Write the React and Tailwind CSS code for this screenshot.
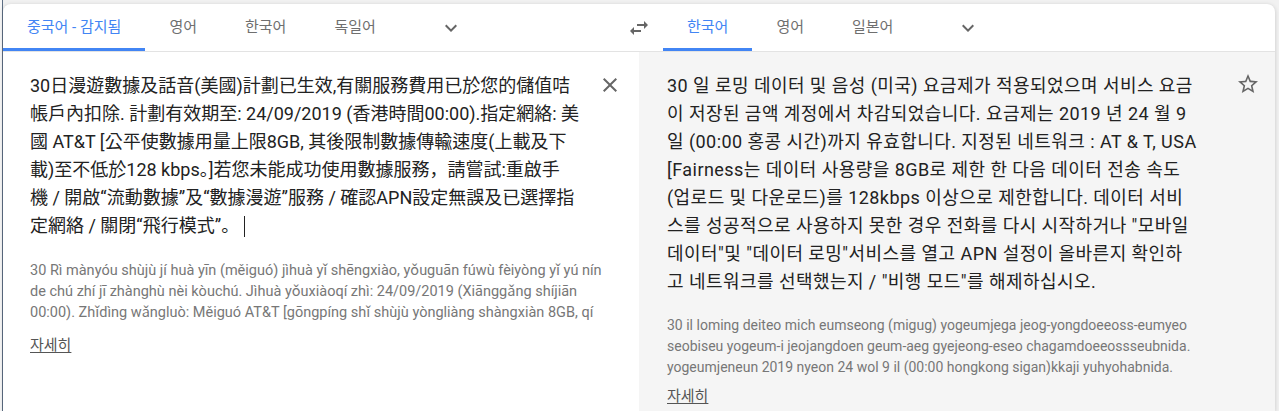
const zhLines = [
  '30日漫遊數據及話音(美國)計劃已生效,有關服務費用已於您的儲值咭',
  '帳戶內扣除. 計劃有效期至: 24/09/2019 (香港時間00:00).指定網絡: 美',
  '國 AT&T [公平使數據用量上限8GB, 其後限制數據傳輸速度(上載及下',
  '載)至不低於128 kbps。]若您未能成功使用數據服務，請嘗試:重啟手',
  '機 / 開啟“流動數據”及“數據漫遊”服務 / 確認APN設定無誤及已選擇指',
];

const pinyin = [
  '30 Rì mànyóu shùjù jí huà yīn (měiguó) jìhuà yǐ shēngxiào, yǒuguān fúwù fèiyòng yǐ yú nín',
  'de chú zhí jī zhànghù nèi kòuchú. Jìhuà yǒuxiàoqí zhì: 24/09/2019 (Xiānggǎng shíjiān',
  '00:00). Zhǐdìng wǎngluò: Měiguó AT&T [gōngpíng shǐ shùjù yòngliàng shàngxiàn 8GB, qí',
];

const koLines = [
  '30 일 로밍 데이터 및 음성 (미국) 요금제가 적용되었으며 서비스 요금',
  '이 저장된 금액 계정에서 차감되었습니다. 요금제는 2019 년 24 월 9',
  '일 (00:00 홍콩 시간)까지 유효합니다. 지정된 네트워크 : AT & T, USA',
  '[Fairness는 데이터 사용량을 8GB로 제한 한 다음 데이터 전송 속도',
  '(업로드 및 다운로드)를 128kbps 이상으로 제한합니다. 데이터 서비',
  '스를 성공적으로 사용하지 못한 경우 전화를 다시 시작하거나 "모바일',
  '데이터"및 "데이터 로밍"서비스를 열고 APN 설정이 올바른지 확인하',
  '고 네트워크를 선택했는지 / "비행 모드"를 해제하십시오.',
];

const roman = [
  '30 il loming deiteo mich eumseong (migug) yogeumjega jeog-yongdoeeoss-eumyeo',
  'seobiseu yogeum-i jeojangdoen geum-aeg gyejeong-eseo chagamdoeeossseubnida.',
  'yogeumjeneun 2019 nyeon 24 wol 9 il (00:00 hongkong sigan)kkaji yuhyohabnida.',
];

const Icon = ({ d, className = 'w-6 h-6' }) => (
  <svg className={className} viewBox="0 0 24 24" fill="currentColor">
    <path d={d} />
  </svg>
);

const Tab = ({ label, active }) => (
  <div
    className={
      active
        ? 'px-6 h-full flex items-center border-b-[3px] border-[#4285f4] text-[#4285f4] pt-[3px]'
        : 'px-6 h-full flex items-center border-b-[3px] border-transparent text-[#6f6f6f] pt-[3px]'
    }
  >
    {label}
  </div>
);

const Chevron = () => (
  <div className="ml-[39px] h-full flex items-center text-[#666]">
    <Icon d="M16.59 8.59L12 13.17 7.41 8.59 6 10l6 6 6-6z" />
  </div>
);

export default function App() {
  return (
    <div
      className="w-full h-[411px] overflow-hidden bg-[#f1f1f1] flex"
      style={{ fontFamily: 'Roboto, "Noto Sans CJK KR", "Noto Sans CJK TC", sans-serif' }}
    >
      <div className="w-[2px] shrink-0 bg-[#f7f7f7]" />
      <div className="w-px shrink-0 bg-[#5d6e84]" />

      <div className="flex-1 mt-[4px] mr-[4px] bg-white rounded-t-lg shadow-[0_1px_4px_rgba(0,0,0,0.18)] flex flex-col overflow-hidden">
        {/* language bar */}
        <div className="h-[48px] shrink-0 flex border-b border-[#e3e3e3] text-[15px]">
          <div className="flex-1 flex h-[47px]">
            <Tab label="중국어 - 감지됨" active />
            <Tab label="영어" />
            <Tab label="한국어" />
            <Tab label="독일어" />
            <Chevron />
          </div>
          <div className="w-[48px] h-[47px] flex items-center justify-center text-[#666]">
            <Icon d="M6.99 11L3 15l3.99 4v-3H14v-2H6.99v-3zM21 9l-3.99-4v3H10v2h7.01v3L21 9z" />
          </div>
          <div className="flex-1 flex h-[47px]">
            <Tab label="한국어" active />
            <Tab label="영어" />
            <Tab label="일본어" />
            <Chevron />
          </div>
        </div>

        <div className="flex-1 grid grid-cols-2">
          {/* source */}
          <div className="bg-white pl-[27px] pr-[17px] pt-[20px] flex min-w-0">
            <div className="flex-1 min-w-0">
              <div className="text-[18px] leading-[28px] text-[#222]">
                {zhLines.map((l) => (
                  <div key={l} className="whitespace-nowrap">{l}</div>
                ))}
                <div className="whitespace-nowrap flex items-center">
                  定網絡 / 關閉“飛行模式”。
                  <span className="inline-block w-px h-[21px] bg-[#222] ml-[5px]" />
                </div>
              </div>
              <div className="mt-[20px] text-[14.5px] leading-[21px] text-[#777]">
                {pinyin.map((l) => (
                  <div key={l} className="whitespace-nowrap">{l}</div>
                ))}
              </div>
              <div className="mt-[12px] text-[15px] leading-[21px] text-[#555] underline underline-offset-2">자세히</div>
            </div>
            <div className="text-[#666] mt-[1px] h-6 shrink-0">
              <Icon d="M19 6.41L17.59 5 12 10.59 6.41 5 5 6.41 10.59 12 5 17.59 6.41 19 12 13.41 17.59 19 19 17.59 13.41 12z" />
            </div>
          </div>

          {/* translation */}
          <div className="bg-[#f5f5f5] pl-[28px] pr-[15px] pt-[20px] flex min-w-0">
            <div className="flex-1 min-w-0">
              <div className="text-[18px] leading-[28px] text-[#222] tracking-[0.45px]">
                {koLines.map((l) => (
                  <div key={l} className="whitespace-nowrap">{l}</div>
                ))}
              </div>
              <div className="mt-[19px] text-[14px] leading-[21px] text-[#777]">
                {roman.map((l) => (
                  <div key={l} className="whitespace-nowrap">{l}</div>
                ))}
              </div>
              <div className="mt-[8px] text-[15px] leading-[21px] text-[#555] underline underline-offset-2">자세히</div>
            </div>
            <div className="text-[#666] h-6 shrink-0">
              <Icon d="M22 9.24l-7.19-.62L12 2 9.19 8.63 2 9.24l5.46 4.73L5.82 21 12 17.27 18.18 21l-1.63-7.03L22 9.24zM12 15.4l-3.76 2.27 1-4.28-3.32-2.88 4.38-.38L12 6.1l1.71 4.04 4.38.38-3.32 2.88 1 4.28L12 15.4z" />
            </div>
          </div>
        </div>
      </div>
    </div>
  );
}
